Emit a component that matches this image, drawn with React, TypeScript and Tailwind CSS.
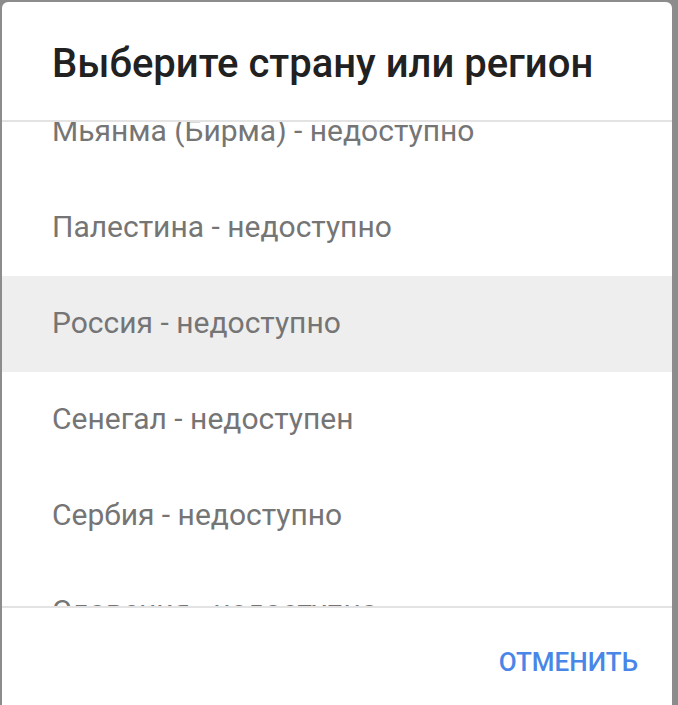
const countries = [
  "Мьянма (Бирма) - недоступно",
  "Палестина - недоступно",
  "Россия - недоступно",
  "Сенегал - недоступен",
  "Сербия - недоступно",
  "Словения - недоступно",
]

export default function App() {
  return (
    <div
      className="h-[705px] w-[678px] overflow-hidden bg-[#8c8c8c] pl-[2px] pt-[2px]"
      style={{ fontFamily: "Roboto, 'Noto Sans', sans-serif" }}
    >
      <div className="flex h-[720px] w-[670px] flex-col rounded-t-[6px] bg-white">
        <header className="h-[120px] shrink-0 border-b-2 border-[#e3e3e3] pl-[50px] pt-[38px]">
          <h1 className="text-[40px] font-medium leading-[48px] text-[#212121]">
            Выберите страну или регион
          </h1>
        </header>
        <div className="h-[486px] shrink-0 overflow-hidden border-b-2 border-[#e3e3e3]">
          <ul className="-mt-[38px]">
            {countries.map((c) => (
              <li
                key={c}
                className={
                  "flex h-[96px] items-center pb-[4px] pl-[50px] text-[30px] text-[#757575] " +
                  (c.startsWith("Россия") ? "bg-[#eeeeee]" : "")
                }
              >
                {c}
              </li>
            ))}
          </ul>
        </div>
        <footer className="flex h-[108px] items-center justify-end pr-[34px]">
          <button className="text-[26px] font-medium text-[#4a86e8]">ОТМЕНИТЬ</button>
        </footer>
      </div>
    </div>
  )
}
